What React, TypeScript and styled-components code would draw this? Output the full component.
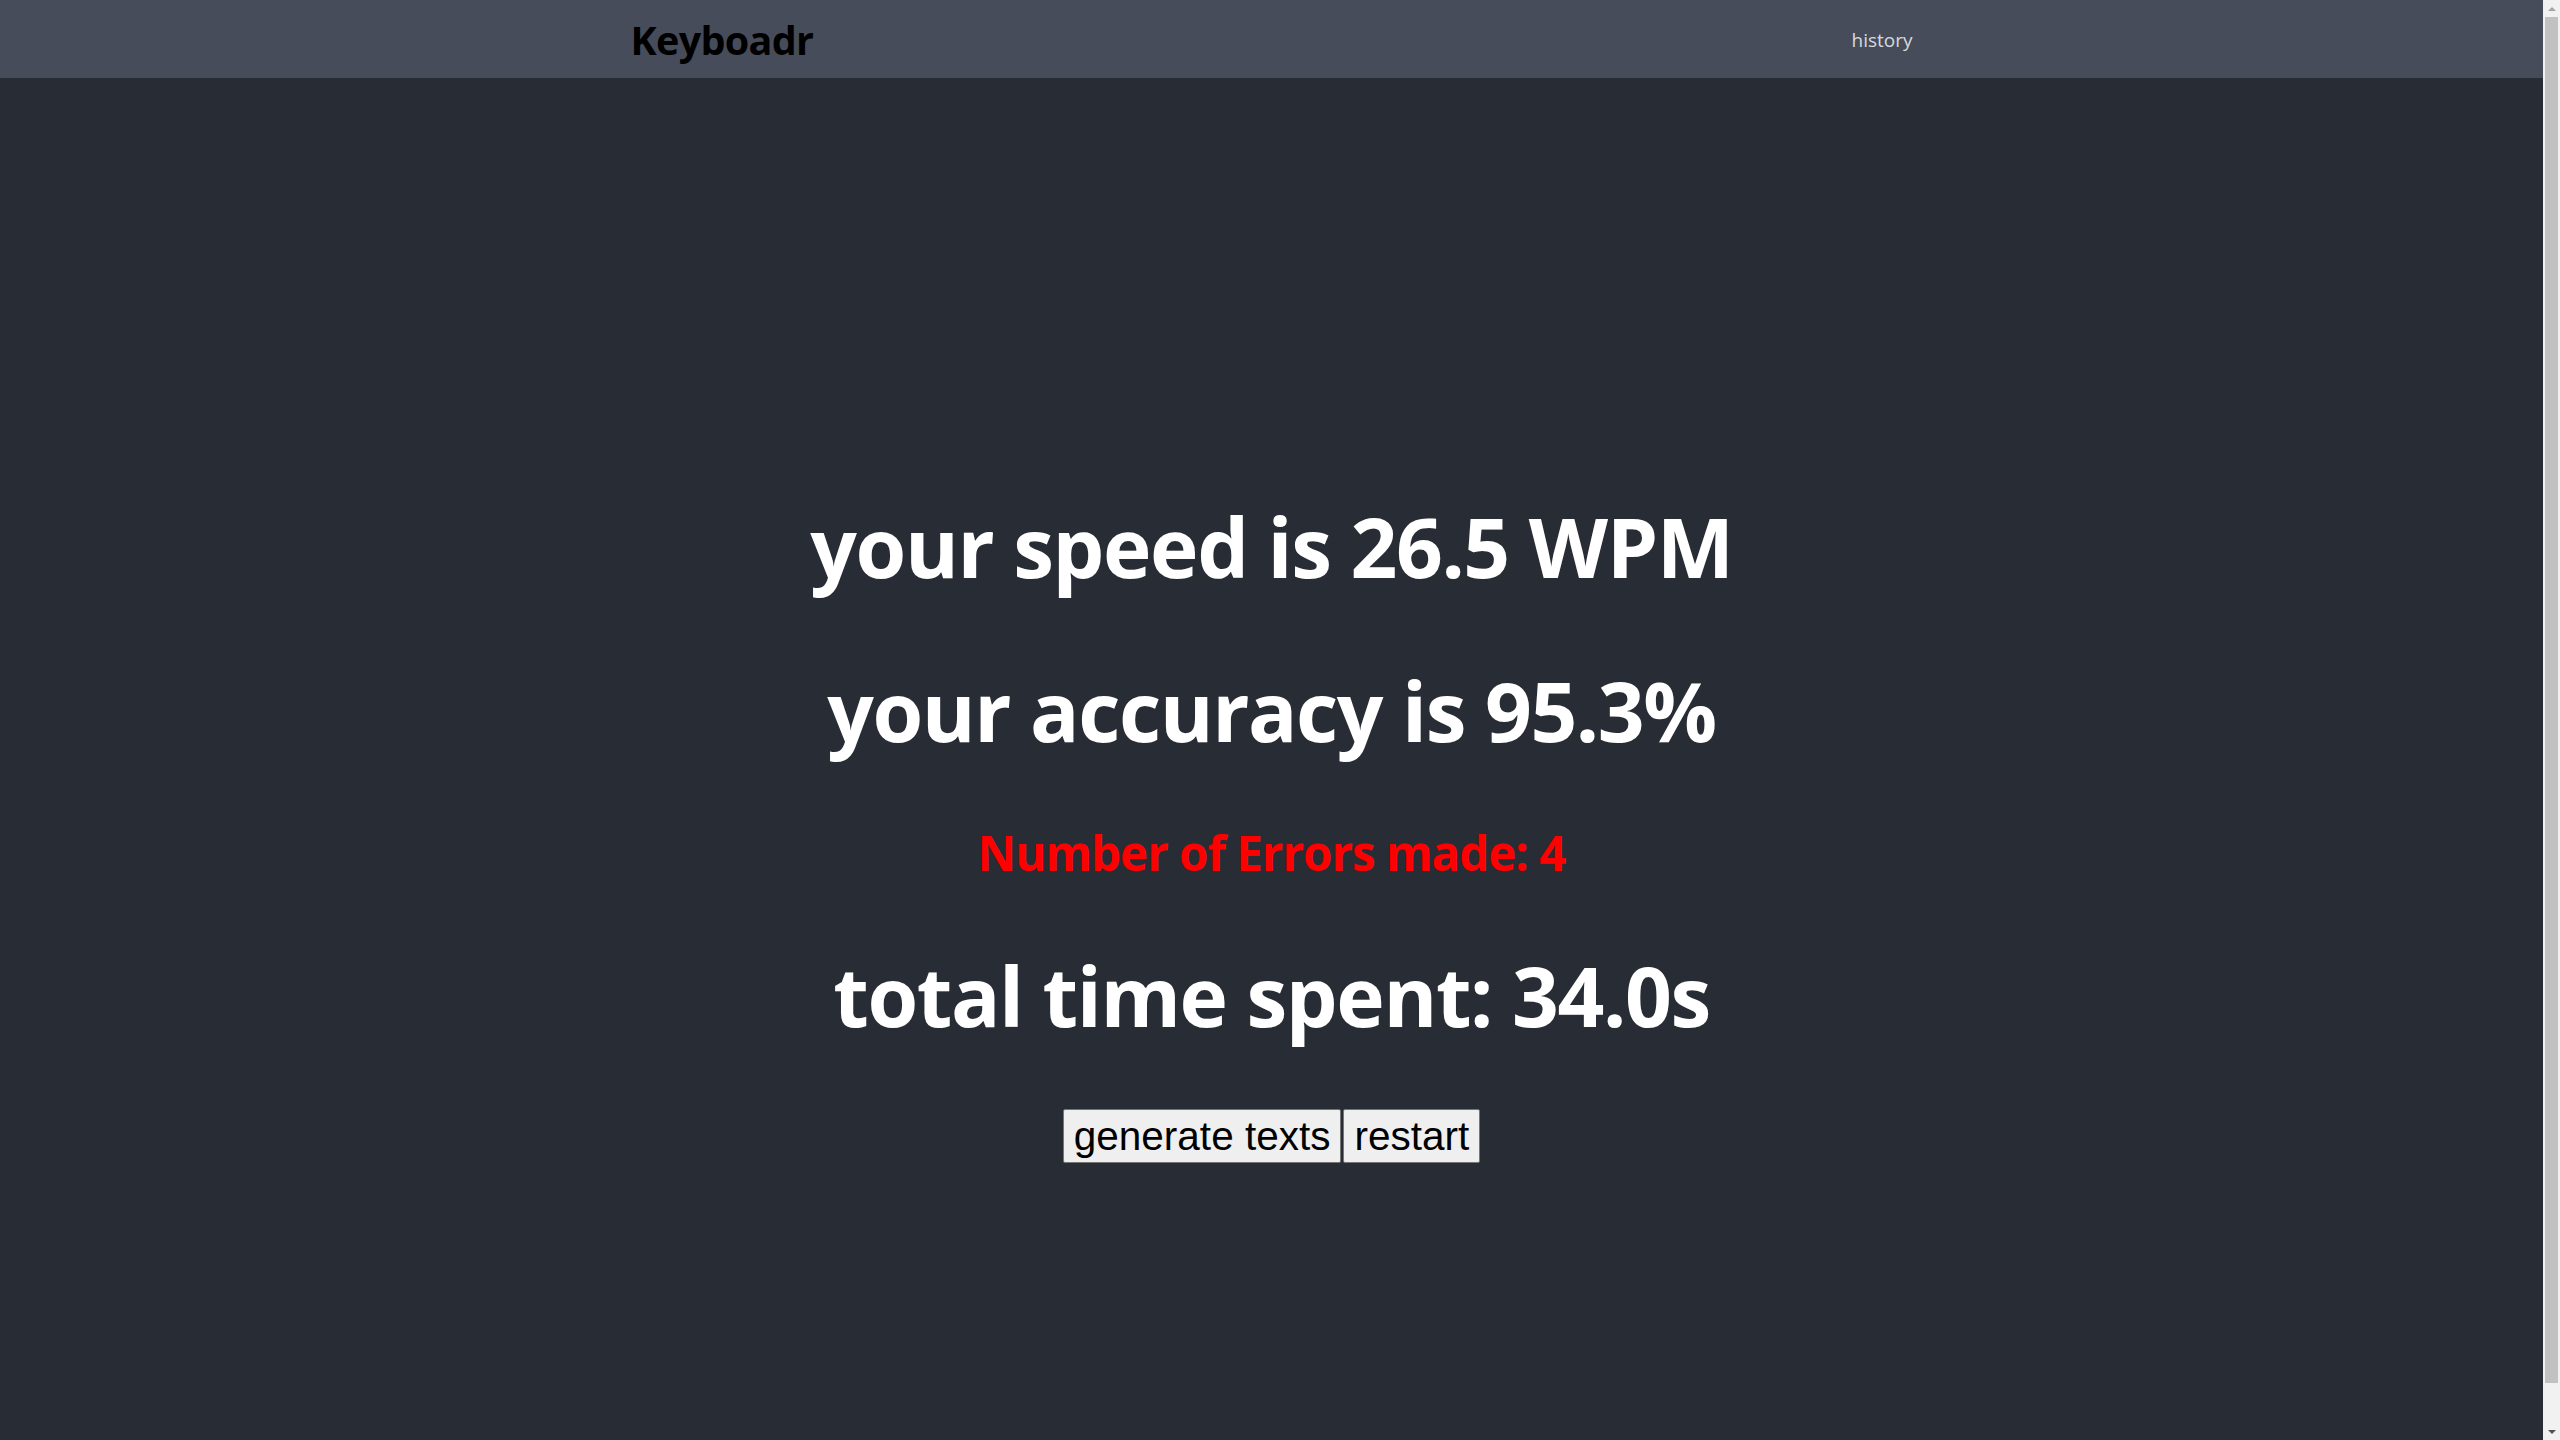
import React from "react";
import styled, { createGlobalStyle } from "styled-components";

const GlobalStyle = createGlobalStyle`
  html, body {
    margin: 0;
    padding: 0;
    background: #282c34;
  }
  body {
    font-family: "Open Sans", "Noto Sans", sans-serif;
  }
  * { box-sizing: border-box; }
`;

const Page = styled.div`
  padding-right: 17px;
`;

const NavBar = styled.header`
  height: 78px;
  background: #464c59;
  display: flex;
  justify-content: center;
`;

const NavInner = styled.div`
  width: 1282px;
  display: flex;
  align-items: center;
  justify-content: space-between;
`;

const Brand = styled.a`
  font-family: "Open Sans", sans-serif;
  font-weight: 700;
  font-size: 39.5px;
  line-height: 1.2;
  color: #000;
  text-decoration: none;
  letter-spacing: -0.7px;
  margin-top: 4px;
`;

const NavLink = styled.a`
  font-family: "Open Sans", sans-serif;
  font-size: 19px;
  line-height: 1.2;
  color: rgba(255, 255, 255, 0.8);
  text-decoration: none;
  margin-top: 2px;
`;

const Main = styled.main`
  min-height: 1382px;
  padding-top: 418px;
  display: flex;
  flex-direction: column;
  align-items: center;
  gap: 63px;
`;

const Stat = styled.h1<{ $small?: boolean; $error?: boolean }>`
  margin: 0;
  font-family: "Open Sans", sans-serif;
  font-weight: 700;
  font-size: ${(p) => (p.$small ? "47.5px" : "82px")};
  line-height: ${(p) => (p.$small ? "58px" : "101px")};
  color: ${(p) => (p.$error ? "#ff0000" : "#ffffff")};
  letter-spacing: ${(p) => (p.$small ? "-1px" : "-1.4px")};
  text-align: center;
`;

const ButtonRow = styled.div`
  display: flex;
  gap: 2px;
`;

const Button = styled.button`
  font-family: "Liberation Sans", Arial, sans-serif;
  font-size: 40.5px;
  line-height: 46px;
  height: 54px;
  padding: 3px 10px;
  background: #efefef;
  color: #000;
  border: 1px solid #767676;
  border-radius: 2px;
  cursor: pointer;
`;

/* Window scrollbar, drawn over the right edge of the viewport */
const ScrollTrack = styled.div`
  position: fixed;
  top: 0;
  right: 0;
  width: 17px;
  height: 100vh;
  background: #f1f1f1;
  display: flex;
  flex-direction: column;
  align-items: center;
`;

const ScrollArrow = styled.div<{ $down?: boolean }>`
  height: 17px;
  width: 17px;
  display: flex;
  align-items: center;
  justify-content: center;
  &::before {
    content: "";
    width: 0;
    height: 0;
    border-left: 4px solid transparent;
    border-right: 4px solid transparent;
    ${(p) =>
      p.$down
        ? "border-top: 4px solid #505050;"
        : "border-bottom: 4px solid #a3a3a3;"}
  }
`;

const ScrollThumb = styled.div`
  width: 13px;
  flex: 1;
  margin-bottom: 40px;
  background: #c1c1c1;
`;

export default function App() {
  return (
    <Page>
      <GlobalStyle />
      <NavBar>
        <NavInner>
          <Brand href="#">Keyboadr</Brand>
          <NavLink href="#">history</NavLink>
        </NavInner>
      </NavBar>
      <Main>
        <Stat>your speed is 26.5 WPM</Stat>
        <Stat>your accuracy is 95.3%</Stat>
        <Stat $small $error>
          Number of Errors made: 4
        </Stat>
        <Stat>total time spent: 34.0s</Stat>
        <ButtonRow>
          <Button>generate texts</Button>
          <Button>restart</Button>
        </ButtonRow>
      </Main>
      <ScrollTrack>
        <ScrollArrow />
        <ScrollThumb />
        <ScrollArrow $down />
      </ScrollTrack>
    </Page>
  );
}
